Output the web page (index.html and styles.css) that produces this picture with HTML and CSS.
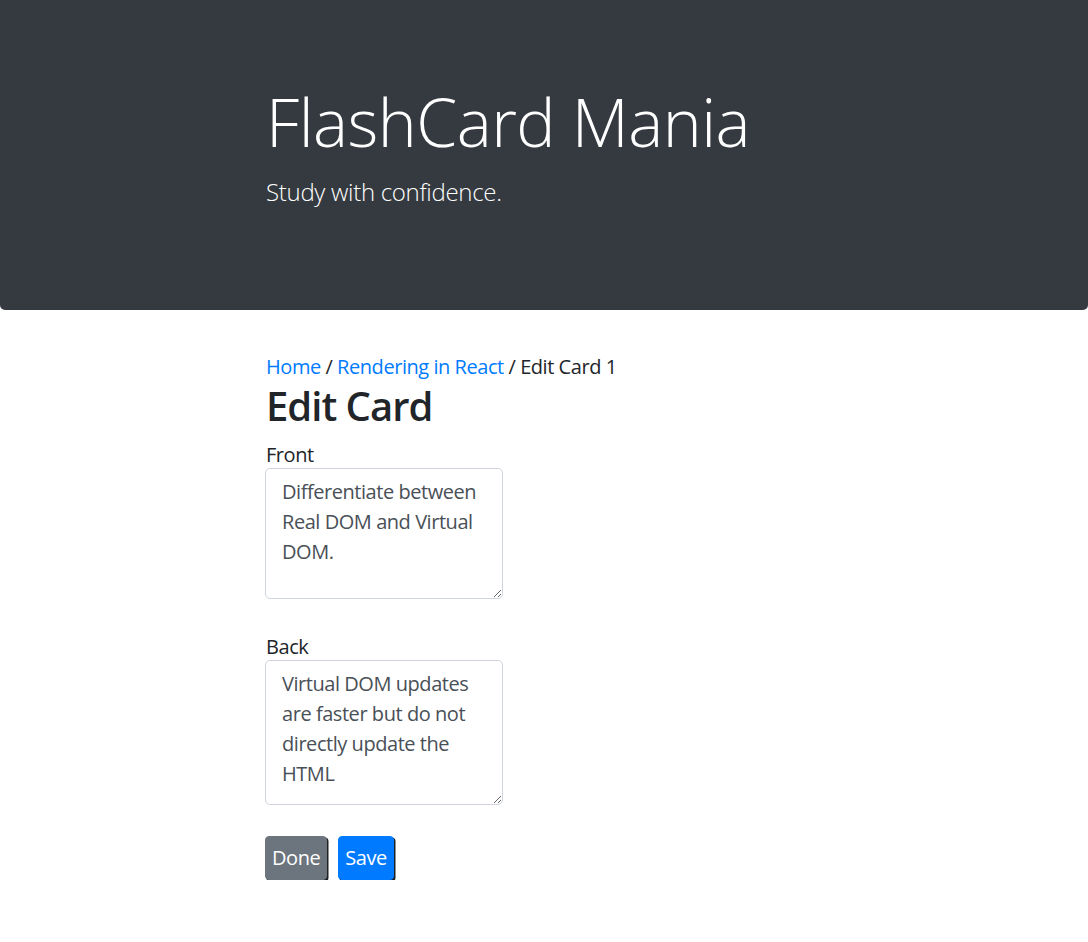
FILE: index.html
```html
<!DOCTYPE html>
<html lang="en">
<head>
<meta charset="utf-8">
<title>FlashCard Mania</title>
<link rel="stylesheet" href="styles.css">
</head>
<body>
<header class="jumbotron">
  <div class="container">
    <h1 class="display">FlashCard Mania</h1>
    <p class="lead">Study with confidence.</p>
  </div>
</header>
<main class="container">
  <nav class="crumbs"><a href="#">Home</a> / <a href="#">Rendering in React</a> / Edit Card 1</nav>
  <h2 class="page-title">Edit Card</h2>
  <form class="card-form">
    <div class="form-group">
      <label class="label" for="front">Front</label>
      <textarea id="front" class="field field-front">Differentiate between Real DOM and Virtual DOM.</textarea>
    </div>
    <div class="form-group">
      <label class="label" for="back">Back</label>
      <textarea id="back" class="field field-back">Virtual DOM updates are faster but do not directly update the HTML</textarea>
    </div>
    <div class="actions">
      <button type="button" class="btn btn-secondary">Done</button>
      <button type="submit" class="btn btn-primary">Save</button>
    </div>
  </form>
</main>
</body>
</html>
```

FILE: styles.css
```css
html, body {
  margin: 0;
  padding: 0;
}
body {
  font-family: "Open Sans", "Noto Sans", sans-serif;
  font-size: 20px;
  line-height: 1.5;
  letter-spacing: -0.45px;
  color: #212529;
  background: #fff;
}
.container {
  padding-left: 266px;
  padding-right: 40px;
}
.jumbotron {
  background: #343a40;
  color: #fff;
  padding: 80px 0;
  margin-bottom: 40px;
  border-radius: 0 0 5px 5px;
}
.display {
  font-size: 66px;
  font-weight: 300;
  line-height: 83px;
  letter-spacing: -0.5px;
  margin: 0 0 10px;
}
.lead {
  font-size: 24px;
  font-weight: 300;
  line-height: 37px;
  letter-spacing: -0.3px;
  margin: 0 0 20px;
}
.crumbs {
  padding-top: 2px;
}
.crumbs a {
  color: #007bff;
  text-decoration: none;
}
.page-title {
  font-size: 40px;
  font-weight: 600;
  line-height: 1.2;
  letter-spacing: -1px;
  margin: 0 0 10px;
}
.card-form {
  display: flex;
  flex-direction: column;
}
.form-group {
  display: flex;
  flex-direction: column;
  align-items: flex-start;
  margin-bottom: 33px;
}
.label {
  display: block;
  line-height: 30px;
}
.field {
  box-sizing: border-box;
  width: 238px;
  margin: -2px 0 0 -1px;
  padding: 7.5px 15px 7.5px 16px;
  font-family: inherit;
  font-size: 20px;
  line-height: 1.5;
  letter-spacing: -0.45px;
  color: #495057;
  border: 1.25px solid #ced4da;
  border-radius: 5px;
  background: #fff;
}
.field-front { height: 131px; }
.field-back { height: 145px; }
.actions {
  display: flex;
  gap: 11px;
  margin: -2px 0 0 -1px;
}
.btn {
  font-family: inherit;
  font-size: 20px;
  line-height: 30px;
  letter-spacing: -0.45px;
  color: #fff;
  padding: 6px 6px;
  border: 1px solid transparent;
  border-radius: 4px;
  box-shadow: 1.5px 1.5px 0 #1d2124;
}
.btn-secondary {
  background: #6c757d;
  border-color: #6c757d;
}
.btn-primary {
  background: #007bff;
  border-color: #007bff;
}
```
